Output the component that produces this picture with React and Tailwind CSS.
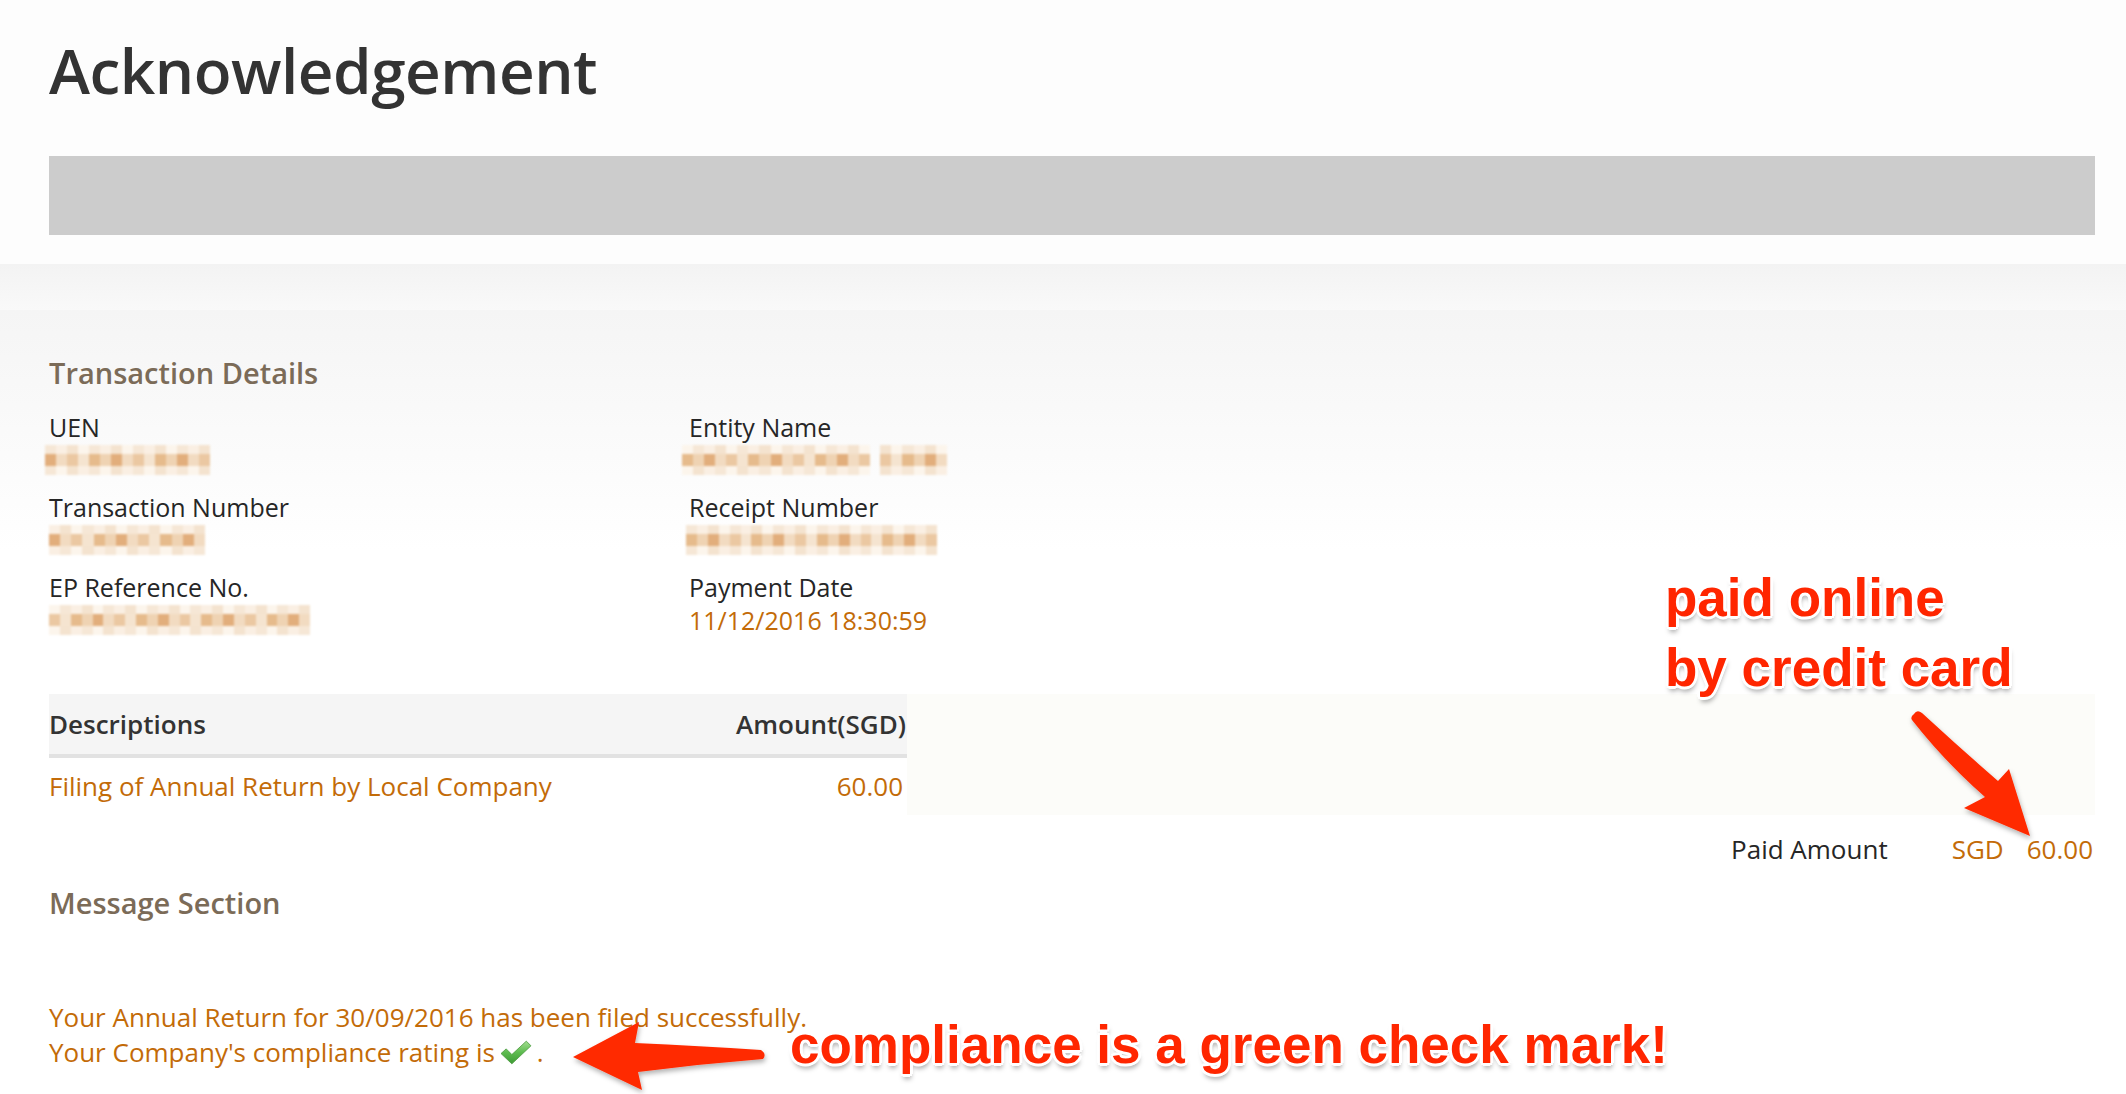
import React from "react";

const tones = ["bg-[#ebc8a2]", "bg-[#f2dbc1]", "bg-[#e2ae7c]", "bg-[#efd3b3]", "bg-[#e6bb8c]", "bg-[#f5e4d0]"];
const pale = ["bg-[#faefe3]", "bg-[#f6e7d6]", "bg-[#fcf5ec]", "bg-[#f4e3cf]"];

// pixelated stand-in for the blurred values
const Mosaic = ({ width, seed = 0 }) => {
  const cols = Math.round(width / 11);
  return (
    <div className="flex h-[30px] blur-[0.8px]" style={{ width }}>
      {Array.from({ length: cols }).map((_, i) => (
        <div key={i} className="flex flex-1 flex-col">
          <div className={`h-[9px] ${pale[(i * 3 + seed) % 4]}`} />
          <div className={`h-[12px] ${tones[(i * 5 + seed * 2) % 6]}`} />
          <div className={`h-[9px] ${pale[(i + seed) % 4]}`} />
        </div>
      ))}
    </div>
  );
};

const Field = ({ label, children }) => (
  <div>
    <div className="h-[30px] text-[25px] leading-[30px] font-medium text-[#262626]">{label}</div>
    <div className="mt-[3px] h-[30px]">{children}</div>
  </div>
);

const Check = () => (
  <svg width="32" height="25" viewBox="0 0 31 24" className="inline-block align-[-3px] mx-[5px]">
    <defs>
      <linearGradient id="chk" x1="0" y1="0" x2="0" y2="1">
        <stop offset="0" stopColor="#a3de90" />
        <stop offset="0.5" stopColor="#5dbb4f" />
        <stop offset="1" stopColor="#3d9a35" />
      </linearGradient>
    </defs>
    <path d="M1 13 L6 8.5 L11.5 14 L25.5 1 L30 5.5 L11.5 23 Z" fill="url(#chk)" stroke="#4a9a3e" strokeWidth="0.8" />
  </svg>
);

const App = () => {
  const callout =
    "absolute font-['Liberation_Sans',Arial,sans-serif] font-bold text-[53px] leading-[70px] text-[#ff2600] whitespace-nowrap [text-shadow:3px_0_0_#fff,-3px_0_0_#fff,0_3px_0_#fff,0_-3px_0_#fff,2px_2px_0_#fff,-2px_-2px_0_#fff,2px_-2px_0_#fff,-2px_2px_0_#fff,1px_5px_5px_rgba(0,0,0,0.35)]";

  return (
    <div className="relative min-h-screen bg-white font-['Open_Sans',sans-serif]">
      <div className="h-[264px] bg-[#fdfdfd] pl-[49px] pr-[31px] pt-[38px]">
        <h1 className="text-[62px] leading-[64px] font-semibold text-[#333] tracking-[-0.5px]">
          Acknowledgement
        </h1>
        <div className="mt-[54px] h-[79px] bg-[#cccccc]" />
      </div>
      <div className="h-[46px] bg-linear-to-b from-[#f3f3f3] to-[#f9f9f9]" />

      <div className="bg-[linear-gradient(to_bottom,#f5f5f5,#ffffff_240px)] pl-[49px] pr-[31px] pt-[45px] pb-[40px]">
        <h2 className="text-[29px] leading-[36px] font-semibold text-[#7b6b58]">Transaction Details</h2>

        <div className="mt-[21px] grid grid-cols-[640px_1fr] gap-y-[17px]">
          <Field label="UEN">
            <div className="-ml-[4px]">
              <Mosaic width={165} seed={1} />
            </div>
          </Field>
          <Field label="Entity Name">
            <div className="-ml-[7px] flex gap-[10px]">
              <Mosaic width={188} seed={2} />
              <Mosaic width={67} seed={3} />
            </div>
          </Field>
          <Field label="Transaction Number">
            <Mosaic width={156} seed={4} />
          </Field>
          <Field label="Receipt Number">
            <div className="-ml-[3px]">
              <Mosaic width={251} seed={5} />
            </div>
          </Field>
          <Field label="EP Reference No.">
            <Mosaic width={261} seed={6} />
          </Field>
          <Field label="Payment Date">
            <div className="text-[25px] leading-[30px] font-medium text-[#c36b08]">11/12/2016 18:30:59</div>
          </Field>
        </div>

        <div className="mt-[59px] flex">
          <div className="w-[858px]">
            <div className="flex h-[64px] justify-between border-b-4 border-[#e2e2e2] bg-[#f5f5f5] text-[26px] leading-[60px] font-semibold text-[#333]">
              <span>Descriptions</span>
              <span className="pr-[1px]">Amount(SGD)</span>
            </div>
            <div className="flex h-[57px] justify-between text-[26px] leading-[57px] text-[#c36b08]">
              <span>Filing of Annual Return by Local Company</span>
              <span className="pr-[4px]">60.00</span>
            </div>
          </div>
          <div className="h-[121px] flex-1 bg-[#fcfcf9]" />
        </div>

        <div className="mt-[16px] flex justify-end pr-[2px] text-[26px] leading-[36px]">
          <span className="text-[#262626]">Paid Amount</span>
          <span className="ml-[64px] text-[#c36b08]">SGD</span>
          <span className="ml-[23px] text-[#c36b08]">60.00</span>
        </div>

        <h2 className="mt-[18px] text-[29px] leading-[36px] font-semibold text-[#7b6b58]">Message Section</h2>

        <div className="mt-[79px] text-[26px] leading-[35px] text-[#c36b08]">
          <p>Your Annual Return for 30/09/2016 has been filed successfully.</p>
          <p>
            Your Company's compliance rating is
            <Check />.
          </p>
        </div>
      </div>

      {/* annotations drawn over the page */}
      <svg
        className="pointer-events-none absolute left-0 top-0"
        width="2126"
        height="1094"
        viewBox="0 0 2126 1094"
      >
        <defs>
          <filter id="sh" x="-20%" y="-20%" width="140%" height="140%">
            <feDropShadow dx="1" dy="3" stdDeviation="2.5" floodColor="#000" floodOpacity="0.3" />
          </filter>
        </defs>
        <path
          d="M1914 714 Q1917 709 1922 713 Q1960 748 1998 781 L2009 769 L2030 836 L1964 808 L1985 797 Q1945 762 1912 720 Q1910 717 1914 714 Z"
          fill="#ff2a00"
          filter="url(#sh)"
        />
        <path
          d="M573 1057 L639 1022 L635 1043 Q700 1046 761 1050 Q767 1054 763 1059 Q700 1064 638 1072 L642 1090 Z"
          fill="#ff2a00"
          filter="url(#sh)"
        />
      </svg>
      <div className={`${callout} left-[1665px] top-[563px]`}>
        paid online
        <br />
        by credit card
      </div>
      <div className={`${callout} left-[790px] top-[1010px]`}>compliance is a green check mark!</div>
    </div>
  );
};

export default App;
